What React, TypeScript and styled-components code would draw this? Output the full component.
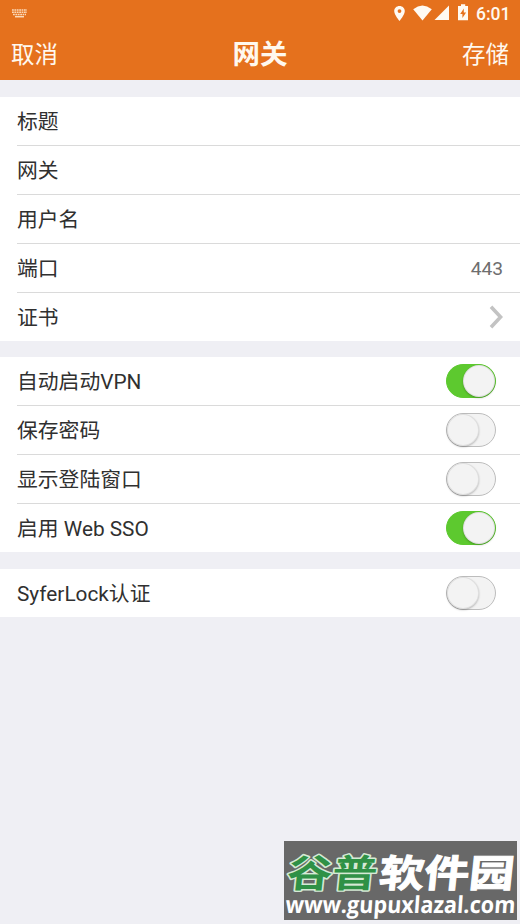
import React from "react";
import styled, { createGlobalStyle } from "styled-components";

const GlobalStyle = createGlobalStyle`
  * { box-sizing: border-box; }
  html, body { margin: 0; padding: 0; background: #efeff4; }
  body { font-family: Roboto, "Noto Sans CJK SC", sans-serif; color: #303030; }
`;

const Screen = styled.div`
  position: relative;
  width: 520px;
  height: 924px;
  overflow: hidden;
  background: #efeff4;
  display: flex;
  flex-direction: column;
`;

const Header = styled.header`
  height: 80px;
  flex: none;
  background: #e5711d;
  color: #fff8ee;
`;

const StatusBar = styled.div`
  height: 26px;
  display: flex;
  align-items: center;
  justify-content: space-between;
  padding: 0 9px 0 12px;
`;

const StatusIcons = styled.div`
  display: flex;
  align-items: center;
`;

const Clock = styled.span`
  width: 35px;
  margin-left: 7px;
  padding-top: 1px;
  font-size: 17.5px;
  line-height: 26px;
  font-weight: 500;
  white-space: nowrap;
`;

const NavBar = styled.nav`
  height: 54px;
  display: grid;
  grid-template-columns: 1fr auto 1fr;
  align-items: center;
  padding: 3px 11px 0;
`;

const NavAction = styled.button<{ $end?: boolean }>`
  border: 0;
  padding: 0;
  background: none;
  color: inherit;
  font-family: inherit;
  font-size: 23.5px;
  line-height: 50px;
  text-align: ${(p) => (p.$end ? "right" : "left")};
`;

const Title = styled.h1`
  margin: 0;
  font-size: 27.5px;
  line-height: 50px;
  font-weight: 700;
`;

const Group = styled.section`
  flex: none;
  margin-top: 16.5px;
  padding-left: 17px;
  background: #fff;
`;

const Row = styled.div`
  height: 49px;
  display: flex;
  align-items: center;
  justify-content: space-between;
  padding-right: 17px;
  border-bottom: 1px solid #dadada;
  &:last-child {
    height: 48px;
    border-bottom: 0;
  }
`;

const Label = styled.span`
  padding-top: 2px;
  font-size: 20.8px;
  line-height: 46px;
  white-space: pre;
`;

const Value = styled.span`
  padding-top: 2px;
  font-size: 19.2px;
  color: #6e6e6e;
`;

const Track = styled.button<{ $on: boolean }>`
  width: 50px;
  height: 34px;
  margin-right: 7px;
  padding: 0;
  display: flex;
  align-items: center;
  justify-content: ${(p) => (p.$on ? "flex-end" : "flex-start")};
  border: 1px solid ${(p) => (p.$on ? "#5dc92f" : "#bdbdbd")};
  border-radius: 17px;
  background: ${(p) => (p.$on ? "#5dc92f" : "#f3f3f3")};
`;

const Knob = styled.span`
  width: 32px;
  height: 32px;
  border-radius: 50%;
  background: #f3f3f3;
  border: 1px solid rgba(0, 0, 0, 0.08);
  box-shadow: 0 1px 2px rgba(0, 0, 0, 0.25);
`;

const Watermark = styled.aside`
  position: absolute;
  right: 3px;
  bottom: 4px;
  width: 233px;
  height: 79px;
  background: #686868;
`;

const MarkDrawing = styled.svg`
  display: block;
  overflow: visible;
  font-family: "Noto Sans CJK SC", sans-serif;
`;

const Toggle = ({ on, label }: { on: boolean; label: string }) => {
  const [checked, setChecked] = React.useState(on);
  return (
    <Track $on={checked} role="switch" aria-checked={checked} aria-label={label} onClick={() => setChecked(!checked)}>
      <Knob />
    </Track>
  );
};

const KeyboardIcon = () => (
  <svg width="16" height="9" viewBox="0 0 16 9" stroke="#fbd9b8" fill="none">
    <path d="M0 1h15M0 3.3h15M1 5.5h13" strokeWidth="1.4" strokeDasharray="1.8 .6" />
    <path d="M3 7.7h9" strokeWidth="1.5" />
  </svg>
);

const StatusGlyphs = () => (
  <svg width="76" height="20" viewBox="0 0 76 20" fill="#fffaf2">
    <path fillRule="evenodd" d="M6.5 3C3.5 3 1.2 5.2 1.2 8.1c0 3.8 5.3 9.9 5.3 9.9s5.3-6.1 5.3-9.9C11.8 5.2 9.5 3 6.5 3Zm0 3.2a1.9 1.9 0 1 1 0 3.8 1.9 1.9 0 0 1 0-3.8Z" />
    <path d="M20.2 6.2Q29.4-1 38.8 6.2L29.5 17.5Z" />
    <path d="M56 2.5V17H41.5Z" />
    <path fillRule="evenodd" d="M68 1.3h4.2V3H75v14.2H65V3h3ZM70.8 5.5l-3.6 5.4h2.2v4.1l3.7-5.5h-2.3Z" />
  </svg>
);

const Chevron = () => (
  <svg width="14" height="24" viewBox="0 0 14 24" fill="none" stroke="#c3c3c3" strokeWidth="3.6">
    <path d="M2 1.8 11.6 12 2 22.2" />
  </svg>
);

const toggles = [
  { label: "自动启动VPN", on: true },
  { label: "保存密码", on: false },
  { label: "显示登陆窗口", on: false },
  { label: "启用 Web SSO", on: true },
];

export default function App() {
  return (
    <>
      <GlobalStyle />
      <Screen>
        <Header>
          <StatusBar>
            <KeyboardIcon />
            <StatusIcons>
              <StatusGlyphs />
              <Clock>6:01</Clock>
            </StatusIcons>
          </StatusBar>
          <NavBar>
            <NavAction>取消</NavAction>
            <Title>网关</Title>
            <NavAction $end>存储</NavAction>
          </NavBar>
        </Header>
        <Group>
          <Row><Label>标题</Label></Row>
          <Row><Label>网关</Label></Row>
          <Row><Label>用户名</Label></Row>
          <Row><Label>端口</Label><Value>443</Value></Row>
          <Row><Label>证书</Label><Chevron /></Row>
        </Group>
        <Group>
          {toggles.map((t) => (
            <Row key={t.label}>
              <Label>{t.label}</Label>
              <Toggle on={t.on} label={t.label} />
            </Row>
          ))}
        </Group>
        <Group>
          <Row>
            <Label>SyferLock认证</Label>
            <Toggle on={false} label="SyferLock认证" />
          </Row>
        </Group>
        <Watermark>
          <MarkDrawing width="233" height="79" viewBox="0 0 233 79">
            <g transform="skewX(-6)" fontWeight="700">
              <text x="7" y="46.5" fontSize="38" textLength="90" lengthAdjust="spacingAndGlyphs" fill="#2f9146" stroke="#d5ead5" strokeWidth="3" strokeLinejoin="round" paintOrder="stroke">谷普</text>
              <text x="99" y="46.5" fontSize="38" textLength="135" lengthAdjust="spacingAndGlyphs" fill="#fff" stroke="#fff" strokeWidth="1">软件园</text>
            </g>
            <text transform="skewX(-4)" x="6" y="72" fontFamily="'Open Sans', sans-serif" fontSize="23.5" fontWeight="700" textLength="230" lengthAdjust="spacingAndGlyphs" fill="#fff">www.gupuxlazal.com</text>
          </MarkDrawing>
        </Watermark>
      </Screen>
    </>
  );
}
